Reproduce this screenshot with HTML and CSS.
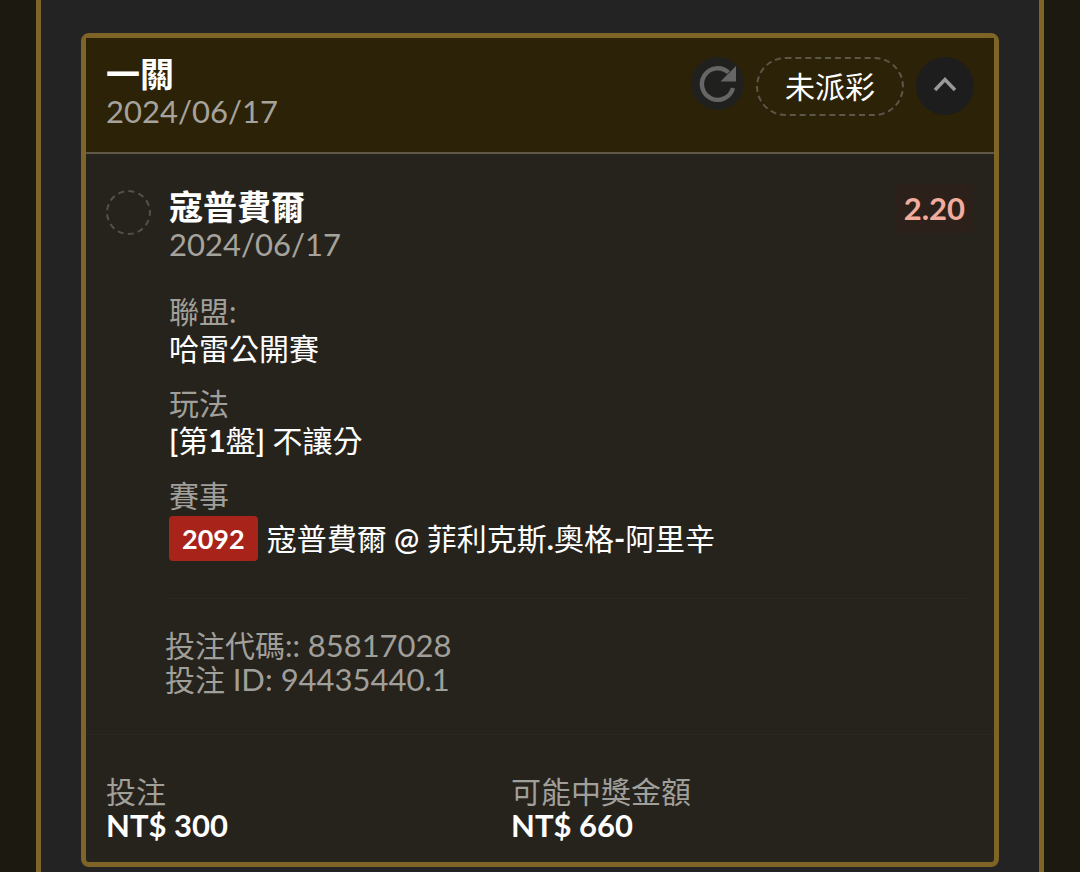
FILE: index.html
```html
<!DOCTYPE html>
<html lang="zh-Hant">
<head>
<meta charset="utf-8">
<meta name="viewport" content="width=device-width, initial-scale=1">
<title>一關</title>
<link rel="stylesheet" href="styles.css">
</head>
<body>
<main class="panel">
  <article class="slip">
    <header class="slip-header">
      <div class="heading">
        <h1 class="title">一關</h1>
        <time class="date" datetime="2024-06-17">2024/06/17</time>
      </div>
      <div class="actions">
        <button class="refresh" type="button" aria-label="Refresh">
          <svg viewBox="0 0 38 38" width="38" height="38" aria-hidden="true"><path d="M34 23A15.800 15.800 0 1 1 29.500 7.500" fill="none" stroke="currentColor" stroke-width="4.400"/><path d="M37 1v15.500H21.500z" fill="currentColor"/></svg>
        </button>
        <span class="status">未派彩</span>
        <button class="toggle" type="button" aria-label="Collapse" aria-expanded="true">
          <svg viewBox="0 0 24 20" width="24" height="20" aria-hidden="true"><path d="M2 14 12 3.500l10 10.500" fill="none" stroke="currentColor" stroke-width="3.500"/></svg>
        </button>
      </div>
    </header>
    <section class="selection">
      <span class="marker"></span>
      <div class="details">
        <div class="pick">
          <div class="heading">
            <h2 class="title">寇普費爾</h2>
            <time class="date" datetime="2024-06-17">2024/06/17</time>
          </div>
          <span class="odds">2.20</span>
        </div>
        <dl class="facts">
          <div><dt>聯盟:</dt><dd>哈雷公開賽</dd></div>
          <div><dt>玩法</dt><dd><span class="latin">[</span>第<b>1</b>盤<span class="latin">] </span>不讓分</dd></div>
          <div><dt>賽事</dt><dd class="match"><span class="code">2092</span><span>寇普費爾<span class="latin"> @ </span>菲利克斯<b>.</b>奧格<b>-</b>阿里辛</span></dd></div>
        </dl>
        <div class="reference">
          <p>投注代碼:: <span class="number">85817028</span></p>
          <p>投注 <span class="number">ID: 94435440.1</span></p>
        </div>
      </div>
    </section>
    <footer>
      <dl class="totals">
        <div><dt>投注</dt><dd>NT$ 300</dd></div>
        <div><dt>可能中獎金額</dt><dd>NT$ 660</dd></div>
      </dl>
    </footer>
  </article>
</main>
</body>
</html>
```
FILE: styles.css
```css
* { box-sizing: border-box; }
body {
  margin: 0;
  padding: 0 36px;
  background: #1c1911;
  color: #fff;
  font: 30px/37px Lato, "Noto Sans CJK TC", sans-serif;
}
h1, h2, p, dl, dd { margin: 0; }
button {
  display: grid;
  place-items: center;
  padding: 0;
  border: 0;
  border-radius: 50%;
  cursor: pointer;
}
.panel {
  min-height: 100vh;
  padding: 33px 40px 6px;
  border: solid #7e6427;
  border-width: 0 5px;
  background: #232323;
}
.slip {
  border: 5px solid #7e6427;
  border-radius: 8px;
  background: #26231d;
}
.slip-header {
  display: flex;
  justify-content: space-between;
  align-items: flex-start;
  padding: 19px 20px 22px;
  border-bottom: 2px solid #5f5747;
  background: #2c2207;
}
.heading { margin-top: -2px; }
.title {
  font-size: 34px;
  line-height: 38px;
  font-weight: 700;
}
.date {
  display: block;
  color: #a6a39d;
  font-size: 31px;
  line-height: 37px;
}
.actions {
  display: flex;
  align-items: flex-start;
  gap: 12px;
}
.refresh {
  width: 53px;
  height: 53px;
  background: #20211f;
  color: #666;
}
.status {
  padding: 9px 27px;
  border: 2px dashed #5d574a;
  border-radius: 30px;
}
.toggle {
  width: 58px;
  height: 58px;
  background: #1d1d1d;
  color: #999;
}
.selection {
  display: flex;
  gap: 18px;
  padding: 36px 25px 38px 20px;
}
.marker {
  flex: none;
  width: 45px;
  height: 45px;
  border: 2px dashed #555149;
  border-radius: 50%;
}
.details { flex: 1; }
.pick {
  display: flex;
  justify-content: space-between;
  align-items: flex-start;
}
.odds {
  margin: -6px -4px 0 0;
  padding: 6px 8px;
  background: #2b211a;
  color: #f2ac9e;
  font-size: 31px;
  font-weight: 700;
}
dt, .reference { color: #a19f9a; }
.facts {
  display: grid;
  gap: 18px;
  margin-top: 30px;
}
.facts b { font-weight: 700; }
.latin { font-weight: 600; }
.match {
  display: flex;
  align-items: center;
  gap: 9px;
  padding-top: 2px;
}
.code {
  padding: 4px 13px;
  border-radius: 4px;
  background: #a82319;
  font-size: 27px;
  font-weight: 700;
}
.reference {
  margin: 37px 0 0 -4px;
  padding-top: 29px;
  border-top: 1px solid #2b2822;
  line-height: 34px;
}
.number { font-size: 31px; }
.totals {
  display: grid;
  grid-template-columns: 405px 1fr;
  padding: 39px 20px 20px;
  border-top: 1px solid #2b2822;
  line-height: 34px;
}
.totals dd {
  font-size: 31px;
  font-weight: 700;
}
```
